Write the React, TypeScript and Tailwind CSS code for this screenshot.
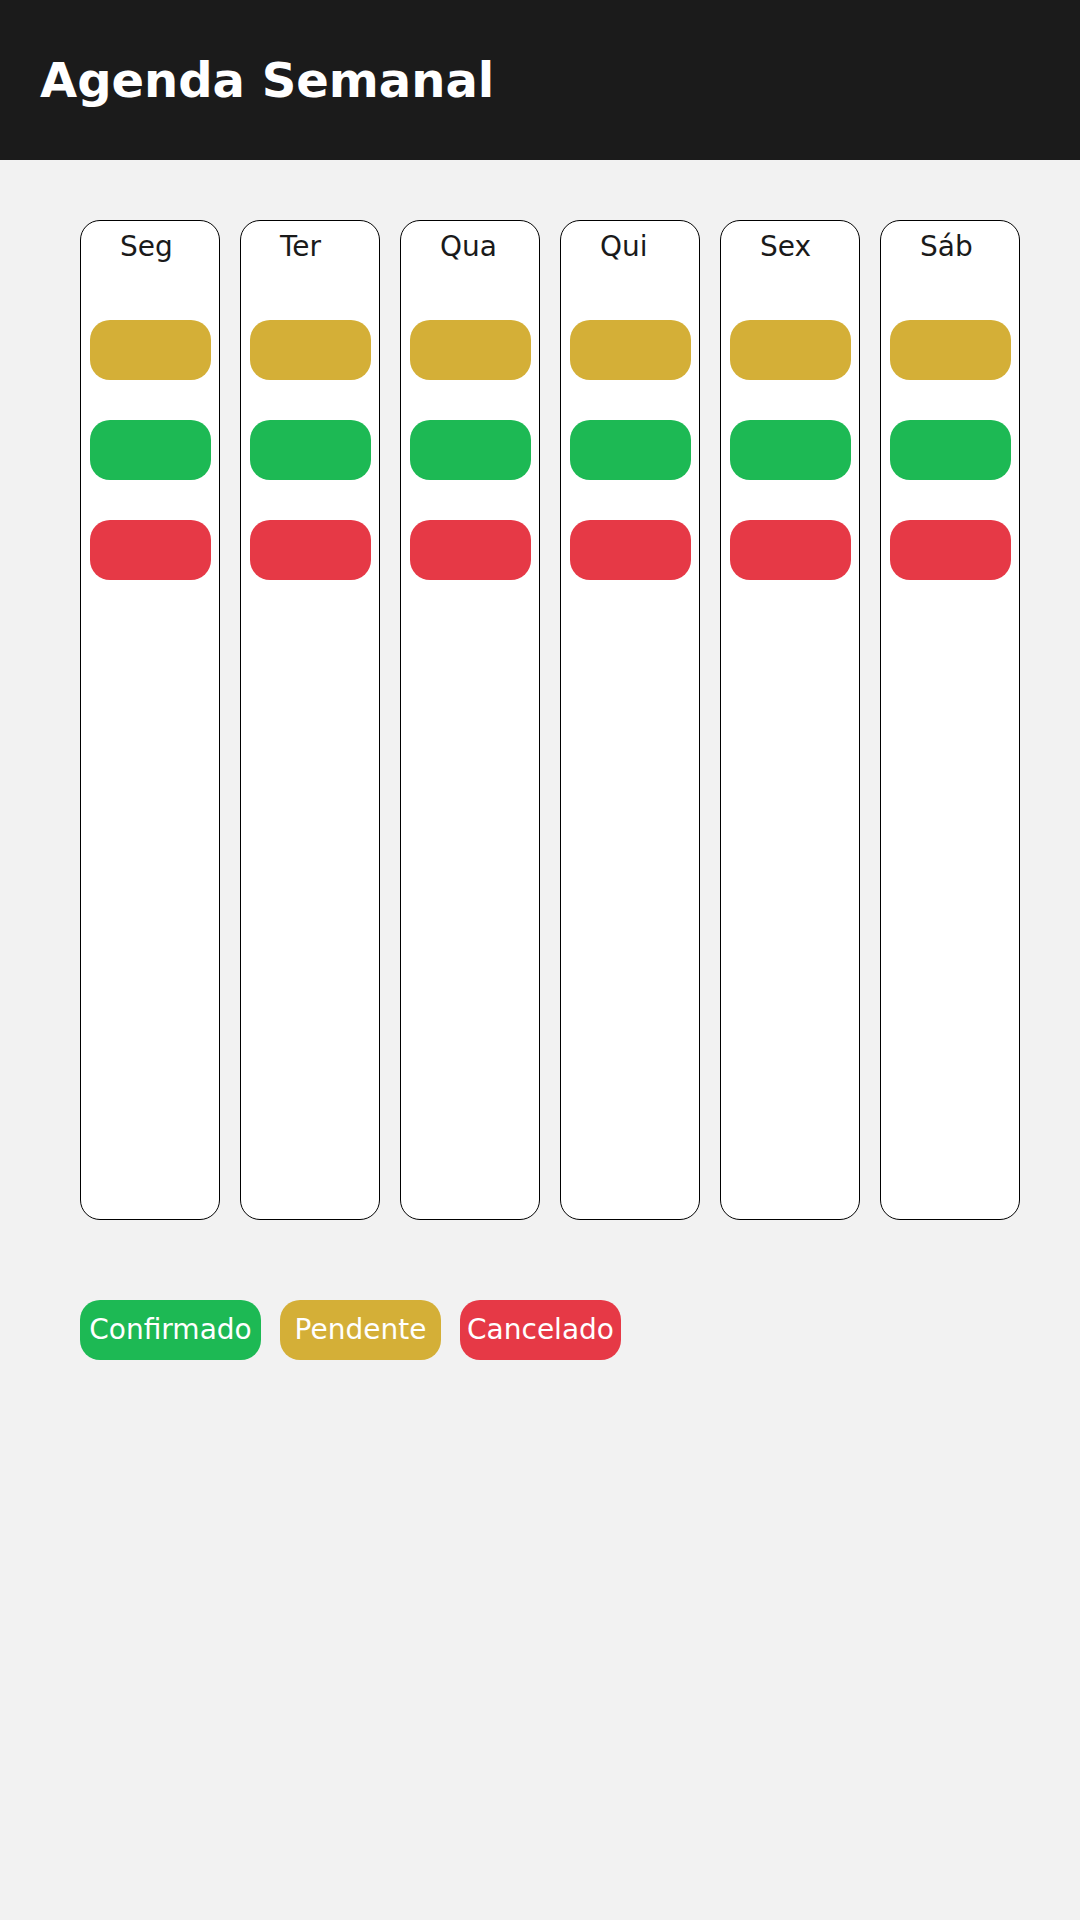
import React from 'react'

const days = ['Seg', 'Ter', 'Qua', 'Qui', 'Sex', 'Sáb']

const slotColors = ['bg-[#d4af37]', 'bg-[#1db954]', 'bg-[#e63946]']

const legend = [
  { label: 'Confirmado', className: 'bg-[#1db954] w-[181px]' },
  { label: 'Pendente', className: 'bg-[#d4af37] w-[161px]' },
  { label: 'Cancelado', className: 'bg-[#e63946] w-[161px]' },
]

const DayColumn: React.FC<{ day: string }> = ({ day }) => (
  <div className="flex h-[1000px] w-[140px] flex-col rounded-[20px] border border-black bg-white">
    <span className="pl-[39px] pt-[9px] text-[28px] leading-[33px] text-[#1a1a1a]">{day}</span>
    <div className="mt-[57px] flex flex-col gap-[40px] pl-[9px]">
      {slotColors.map((c) => (
        <div key={c} className={`h-[60px] w-[121px] rounded-[20px] ${c}`} />
      ))}
    </div>
  </div>
)

export default function App() {
  return (
    <div className="min-h-screen w-full bg-[#f2f2f2] font-['DejaVu_Sans',sans-serif]">
      <header className="flex h-[160px] items-center bg-[#1b1b1b] px-[40px]">
        <h1 className="text-[48px] font-bold leading-none text-white">Agenda Semanal</h1>
      </header>
      <main className="flex flex-col gap-[80px] pl-[80px] pt-[60px]">
        <div className="flex gap-[20px]">
          {days.map((d) => (
            <DayColumn key={d} day={d} />
          ))}
        </div>
        <div className="flex gap-[19px]">
          {legend.map((l) => (
            <div
              key={l.label}
              className={`flex h-[60px] items-center justify-center rounded-[20px] text-[28px] text-white ${l.className}`}
            >
              {l.label}
            </div>
          ))}
        </div>
      </main>
    </div>
  )
}
